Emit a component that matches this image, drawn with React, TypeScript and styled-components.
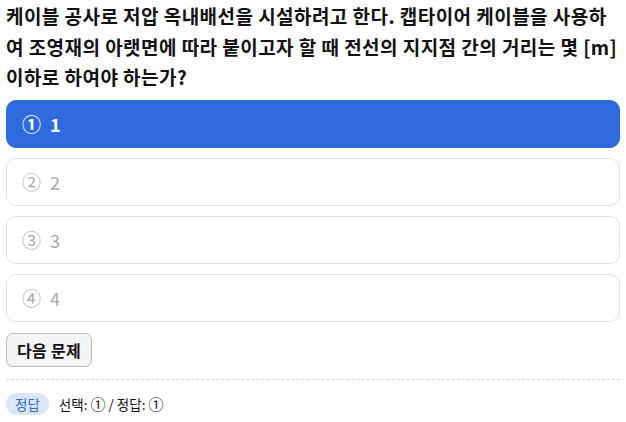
import React from "react";
import styled, { createGlobalStyle } from "styled-components";

const Global = createGlobalStyle`
  html, body { margin: 0; padding: 0; background: #fff; }
  body {
    font-family: "Noto Sans CJK KR", "Noto Sans", sans-serif;
    color: #111;
  }
`;

const Page = styled.div`
  width: 626px;
  box-sizing: border-box;
  padding: 0 6px;
  display: flex;
  flex-direction: column;
`;

const Question = styled.h1`
  margin: 0;
  padding-top: 1px;
  font-size: 19px;
  font-weight: 700;
  line-height: 30.5px;
  letter-spacing: 0.45px;
  white-space: nowrap;
  color: #111;
`;

const Options = styled.div`
  margin-top: 7px;
  display: flex;
  flex-direction: column;
  gap: 10px;
`;

const Option = styled.div<{ $selected?: boolean }>`
  height: 48px;
  box-sizing: border-box;
  display: flex;
  align-items: center;
  gap: 9px;
  padding: 0 15px;
  border-radius: 10px;
  border: 1px solid ${(p) => (p.$selected ? "#2d6bdc" : "#e0e0e0")};
  background: ${(p) => (p.$selected ? "#2d6bdc" : "#fff")};
  color: ${(p) => (p.$selected ? "#fff" : "#a9a9a9")};
  font-size: 18px;
  font-weight: ${(p) => (p.$selected ? 700 : 400)};
`;

const Num = styled.span`
  font-size: 19px;
  line-height: 1;
`;

const NextButton = styled.button`
  margin-top: 11px;
  align-self: flex-start;
  height: 34px;
  padding: 0 10px;
  border: 1px solid #b9b9b9;
  border-radius: 7px;
  background: #f5f5f5;
  font-family: inherit;
  font-size: 16px;
  font-weight: 700;
  letter-spacing: 0.3px;
  color: #111;
`;

const Divider = styled.hr`
  margin: 12px 0 0;
  border: 0;
  border-top: 1px dashed #d6d6d6;
`;

const Result = styled.div`
  margin-top: 13px;
  display: flex;
  align-items: center;
  gap: 10px;
  font-size: 13.5px;
  color: #111;
`;

const Badge = styled.span`
  height: 22px;
  display: inline-flex;
  align-items: center;
  padding: 0 9px;
  border-radius: 11px;
  background: #dbe6fb;
  color: #2f69d6;
  font-size: 13.5px;
`;

const Mark = styled.span`
  font-size: 15px;
`;

const options = ["1", "2", "3", "4"];
const marks = ["①", "②", "③", "④"];

export default function App() {
  return (
    <>
      <Global />
      <Page>
        <Question>
          케이블 공사로 저압 옥내배선을 시설하려고 한다. 캡타이어 케이블을 사용하
          <br />
          여 조영재의 아랫면에 따라 붙이고자 할 때 전선의 지지점 간의 거리는 몇 [m]
          <br />
          이하로 하여야 하는가?
        </Question>
        <Options>
          {options.map((o, i) => (
            <Option key={o} $selected={i === 0}>
              <Num>{marks[i]}</Num>
              <span>{o}</span>
            </Option>
          ))}
        </Options>
        <NextButton>다음 문제</NextButton>
        <Divider />
        <Result>
          <Badge>정답</Badge>
          <span>
            선택: <Mark>①</Mark> / 정답: <Mark>①</Mark>
          </span>
        </Result>
      </Page>
    </>
  );
}
